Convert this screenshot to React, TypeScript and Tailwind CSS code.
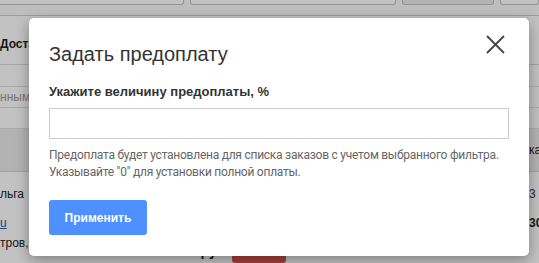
const font = "font-['Liberation_Sans',Arial,sans-serif]";

const CloseIcon = () => (
  <svg width="19" height="19" viewBox="0 0 19 19" fill="none" stroke="currentColor" strokeWidth="1.8">
    <path d="M1 1L18 18M18 1L1 18" />
  </svg>
);

const PageBehind = () => (
  <div className="flex h-full flex-col text-[12px] text-[#222]">
    {/* toolbar with fields */}
    <div className="flex h-[16px] shrink-0 items-start gap-[6px] border-b border-[#cfcfcf] bg-[#fafafa]">
      <div className="-ml-[2px] h-[5px] w-[193px] rounded-b-[3px] border border-t-0 border-[#c4c4c4] bg-white" />
      <div className="h-[5px] w-[213px] rounded-b-[3px] border border-t-0 border-[#c4c4c4] bg-white" />
      <div className="h-[5px] w-[96px] rounded-b-[3px] border border-t-0 border-[#c4c4c4] bg-[#ececec]" />
      <div className="h-[5px] w-[40px] rounded-b-[3px] border border-t-0 border-[#c4c4c4] bg-white" />
    </div>
    <div className="flex h-[49px] shrink-0 items-center border-b border-[#d9d9d9] pt-[7px] font-bold">
      Доставка
    </div>
    <div className="h-[22px] shrink-0 border-b border-[#e2e2e2]" />
    <div className="flex h-[21px] shrink-0 items-center border-b border-[#e2e2e2] text-[#9a9a9a]">
      нными
    </div>
    <div className="h-[21px] shrink-0 border-b border-[#e2e2e2]" />
    {/* table header */}
    <div className="flex h-[43px] shrink-0 items-center justify-end border-b border-[#d4d4d4] bg-[#ececec]">
      <span className="-mr-[6px] w-[16px] whitespace-nowrap">ка</span>
    </div>
    {/* table rows */}
    <div className="flex flex-1 flex-col pt-[14px] leading-[16px]">
      <div className="flex justify-between whitespace-nowrap">
        <span>льга</span>
        <span className="-mr-[4px] w-[14px] text-[#333]">3 з</span>
      </div>
      <div className="mt-[13px] flex justify-between whitespace-nowrap">
        <span className="text-[#1a5ea8] underline">u</span>
        <span className="-mr-[4px] w-[14px] font-bold">30</span>
      </div>
      <div className="mt-[4px] flex items-start whitespace-nowrap">
        <span>тров,</span>
        <span className="ml-[172px] mt-[8px] text-[14px] font-bold">ру</span>
        <span className="ml-[15px] mt-[12px] h-[16px] w-[54px] rounded-[3px] bg-[#d9534f]" />
      </div>
    </div>
  </div>
);

export default function App() {
  return (
    <div className={`relative h-[263px] w-[539px] overflow-hidden bg-white ${font}`}>
      <PageBehind />
      {/* backdrop */}
      <div className="absolute inset-0 bg-black/[0.24]" />
      {/* modal */}
      <div className="absolute left-[29px] top-[18px] w-[500px] rounded-[5px] bg-white px-[20px] pb-[21px] pt-[22px] shadow-[0_4px_14px_rgba(0,0,0,0.35)]">
        <button className="absolute right-[24px] top-[17px] text-[#444]">
          <CloseIcon />
        </button>
        <h2 className="text-[20px] leading-[28px] text-[#333]">Задать предоплату</h2>
        <label className="mt-[16px] block text-[13px] font-bold leading-[16px] text-[#333]">
          Укажите величину предоплаты, %
        </label>
        <input
          type="text"
          className="mt-[8px] block h-[31px] w-full border border-[#cccccc] px-[8px] text-[13px] outline-none"
        />
        <p className="mt-[8px] whitespace-nowrap font-['Roboto',Arial,sans-serif] text-[12px] leading-[17px] tracking-[-0.25px] text-[#666]">
          Предоплата будет установлена для списка заказов с учетом выбранного фильтра.
          <br />
          Указывайте "0" для установки полной оплаты.
        </p>
        <button className="mt-[19px] flex h-[35px] w-[98px] items-center justify-center rounded-[3px] bg-[#4d90fe] text-[12px] font-bold text-white">
          Применить
        </button>
      </div>
    </div>
  );
}
